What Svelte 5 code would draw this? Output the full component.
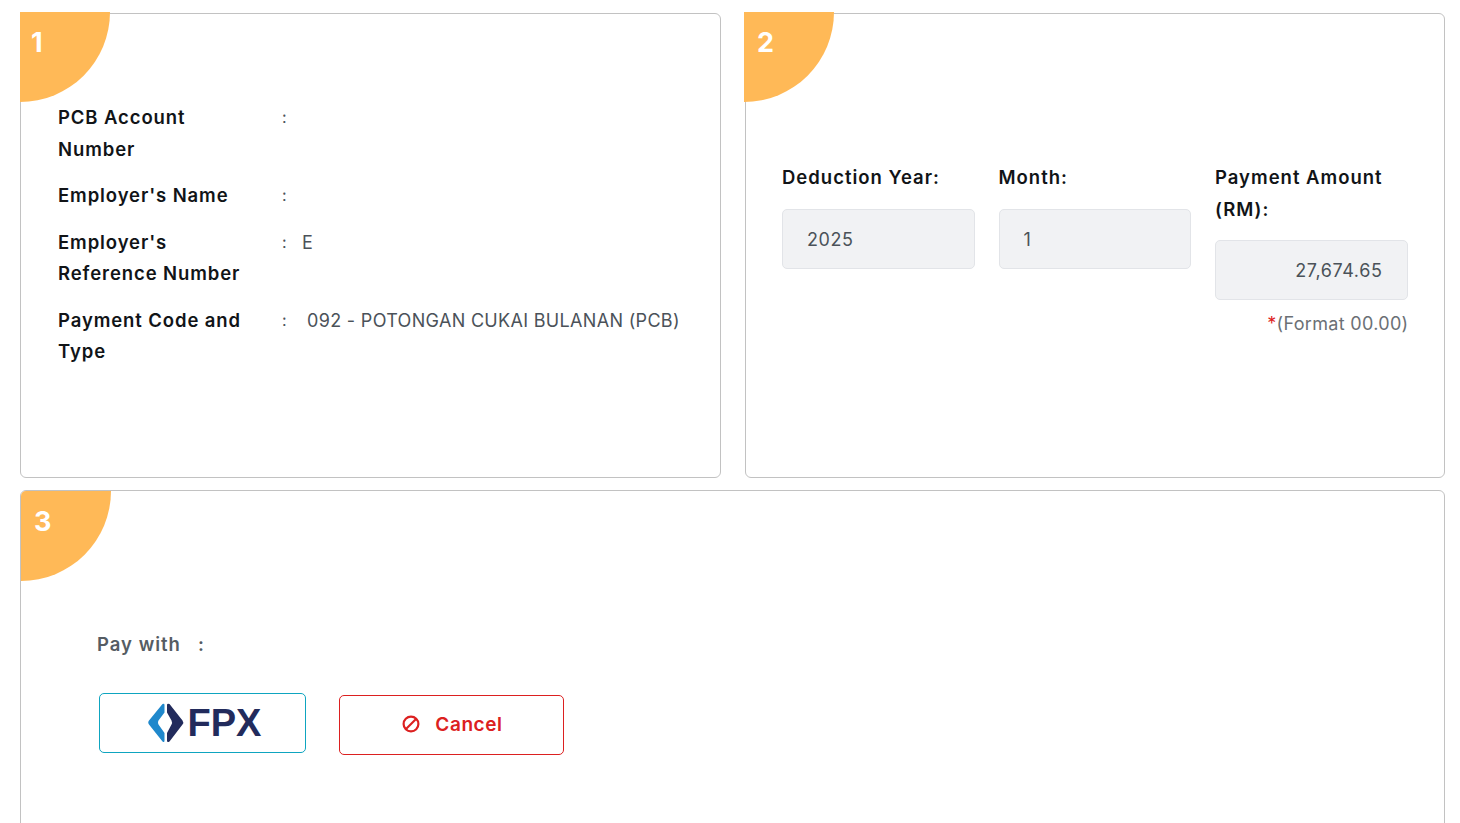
<script>
    const details = [
        { label: "PCB Account Number", value: "" },
        { label: "Employer's Name", value: "" },
        { label: "Employer's Reference Number", value: "E", tight: true },
        { label: "Payment Code and Type", value: "092 - POTONGAN CUKAI BULANAN (PCB)" }
    ];
</script>

<div class="page">
    <div class="top">
        <section class="card">
            <div class="badge">1</div>
            <div class="details">
                {#each details as row}
                    <div class="row">
                        <div class="label">{row.label}</div>
                        <div class="colon">:</div>
                        <div class="value" class:tight={row.tight}>{row.value}</div>
                    </div>
                {/each}
            </div>
        </section>

        <section class="card">
            <div class="badge two">2</div>
            <div class="fields">
                <div class="field">
                    <div class="field-label">Deduction Year:</div>
                    <div class="input">2025</div>
                </div>
                <div class="field">
                    <div class="field-label">Month:</div>
                    <div class="input">1</div>
                </div>
                <div class="field">
                    <div class="field-label">Payment Amount (RM):</div>
                    <div class="input amount">27,674.65</div>
                    <div class="hint"><span class="star">*</span>(Format 00.00)</div>
                </div>
            </div>
        </section>
    </div>

    <section class="card wide">
        <div class="badge three">3</div>
        <div class="pay-label"><span>Pay with</span><span class="pay-colon">:</span></div>
        <div class="buttons">
            <button class="fpx" aria-label="FPX">
                <svg width="36" height="40" viewBox="0 0 36 40">
                    <path d="M14.5 1 L1 17.5 Q-0.5 19.5 1 21.5 L14.5 38.5 Q16.5 40 16.5 37.5 L16.5 30 L10.5 21.5 Q9.5 19.5 10.5 17.5 L16.5 9.5 L16.5 2 Q16.5 0 14.5 1 Z" fill="#1f88cc"/>
                    <path d="M21.5 1 L34.5 17.5 Q36 19.5 34.5 21.5 L21.5 38.5 Q19 40 19 37.5 L19 30 L23.5 21.5 Q24.5 19.5 23.5 17.5 L19 9.5 L19 2 Q19 0 21.5 1 Z" fill="#222b5c"/>
                </svg>
                <span class="fpx-text">FPX</span>
            </button>
            <button class="cancel">
                <svg width="18" height="18" viewBox="0 0 18 18" fill="none" stroke="#dc2020" stroke-width="2.2">
                    <circle cx="9" cy="9" r="7.4"/>
                    <path d="M4 14 L14 4"/>
                </svg>
                <span>Cancel</span>
            </button>
        </div>
    </section>
</div>

<style>
    :global(body) {
        margin: 0;
        background: #fff;
    }

    .page {
        height: 823px;
        overflow: hidden;
        box-sizing: border-box;
        padding: 13px 15px 0 20px;
        font-family: Inter, "Liberation Sans", sans-serif;
        font-size: 18px;
        letter-spacing: 0.32px;
        color: #4b5259;
    }

    .top {
        display: grid;
        grid-template-columns: 701px 700px;
        gap: 24px;
        margin-bottom: 12px;
    }

    .card {
        position: relative;
        box-sizing: border-box;
        height: 465px;
        border: 1px solid #c2c2c2;
        border-radius: 6px;
        background: #fff;
    }

    .wide {
        height: 400px;
    }

    .badge {
        position: absolute;
        left: -1px;
        top: -2px;
        width: 90px;
        height: 90px;
        box-sizing: border-box;
        padding: 15px 0 0 11px;
        background: #ffb957;
        border-bottom-right-radius: 90px;
        color: #fff;
        font-size: 27px;
        font-weight: 700;
        line-height: 32px;
        letter-spacing: 0;
    }

    .two {
        left: -2px;
        padding-left: 13px;
    }

    .three {
        left: 0;
        top: 0;
        padding: 15px 0 0 13px;
        border-top-left-radius: 5px;
    }

    .details {
        padding: 88px 0 0 37px;
    }

    .row {
        display: flex;
        margin-bottom: 15px;
        line-height: 31.5px;
    }

    .label {
        width: 224px;
        padding-right: 30px;
        box-sizing: border-box;
        font-weight: 600;
        font-size: 18.5px;
        letter-spacing: 0.9px;
        color: #111417;
    }

    .colon {
        width: 25px;
        font-size: 16px;
    }

    .value {
        font-size: 18px;
        white-space: nowrap;
    }

    .tight {
        margin-left: -5px;
    }

    .fields {
        display: grid;
        grid-template-columns: repeat(3, 192.5px);
        gap: 24px;
        padding: 148px 0 0 36px;
    }

    .field-label {
        margin-bottom: 15px;
        font-weight: 600;
        font-size: 18.5px;
        letter-spacing: 1px;
        line-height: 31.5px;
        color: #111417;
    }

    .input {
        box-sizing: border-box;
        height: 60px;
        padding: 0 24px;
        border: 1px solid #e2e4e8;
        border-radius: 5px;
        background: #f1f2f4;
        font-size: 18px;
        letter-spacing: 0.6px;
        line-height: 60px;
    }

    .amount {
        text-align: right;
    }

    .hint {
        margin: 8px -1px 0 0;
        text-align: right;
        line-height: 31px;
        font-size: 18px;
        color: #6b7075;
        white-space: nowrap;
    }

    .star {
        color: #e01f1f;
    }

    .pay-label {
        display: flex;
        padding: 138px 0 0 76px;
        font-weight: 600;
        font-size: 18.5px;
        letter-spacing: 1px;
        line-height: 31px;
        color: #555c63;
    }

    .pay-label span:first-child {
        width: 101px;
    }

    .buttons {
        display: flex;
        align-items: flex-start;
        gap: 33px;
        margin: 33px 0 0 78px;
    }

    button {
        display: flex;
        align-items: center;
        justify-content: center;
        box-sizing: border-box;
        background: #fff;
        font-family: inherit;
        border-radius: 5px;
        cursor: pointer;
        padding: 0;
    }

    .fpx {
        width: 207px;
        height: 60px;
        gap: 4px;
        padding-left: 4px;
        border: 1px solid #0ea5c0;
    }

    .fpx-text {
        font-family: "Liberation Sans", sans-serif;
        font-size: 38px;
        font-weight: 700;
        letter-spacing: 0;
        color: #222b5c;
        line-height: 1;
    }

    .cancel {
        width: 225px;
        height: 60px;
        margin-top: 2px;
        gap: 15px;
        padding: 0 0 2px 2px;
        border: 1px solid #dc2020;
        color: #dc2020;
        font-size: 19px;
        font-weight: 600;
        letter-spacing: 0.6px;
    }
</style>
